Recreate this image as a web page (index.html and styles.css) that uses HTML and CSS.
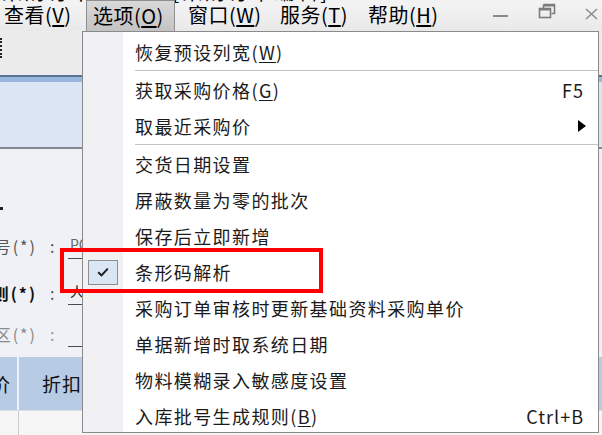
FILE: index.html
```html
<!DOCTYPE html>
<html lang="zh-CN">
<head>
<meta charset="utf-8">
<title>采购订单</title>
<link rel="stylesheet" href="styles.css">
</head>
<body>
<div class="titlestrip"><span class="titletext">采购订单 - 新增 [采购订单编辑]</span></div>
<div class="menubar">
  <div class="mi mi-first">查看(<u>V</u>)</div>
  <div class="mi mi-active">选项(<u>O</u>)</div>
  <div class="mi">窗口(<u>W</u>)</div>
  <div class="mi">服务(<u>T</u>)</div>
  <div class="mi">帮助(<u>H</u>)</div>
  <div class="winctl">
    <span class="wc wc-min"></span>
    <svg class="wc wc-restore" width="18" height="16" viewBox="0 0 18 16">
      <path d="M5.5 1.5h11v9h-3" fill="none" stroke="#7c7c7c" stroke-width="1.6"/>
      <path d="M5.5 1.5v4" fill="none" stroke="#7c7c7c" stroke-width="1.6"/>
      <rect x="1.5" y="5.5" width="11" height="9" fill="none" stroke="#7c7c7c" stroke-width="1.6"/>
      <path d="M1.5 6.5h11" stroke="#7c7c7c" stroke-width="2"/>
      <path d="M5.5 2.5h11" stroke="#7c7c7c" stroke-width="2"/>
    </svg>
    <svg class="wc wc-close" width="13" height="12" viewBox="0 0 13 12">
      <path d="M1 1l11 10M12 1L1 11" stroke="#8c8c8c" stroke-width="1.5" fill="none"/>
    </svg>
  </div>
</div>
<div class="page">
  <div class="toolbar"><span class="dots"></span></div>
  <div class="tabband"></div>
  <div class="bluepanel"></div>
  <div class="form">
    <span class="dot"></span>
    <div class="frow frow-1">
      <div class="flab"><span class="ftext">号(*)</span></div>
      <div class="colon">:</div>
      <div class="fval">PO00123</div>
    </div>
    <div class="frow frow-2">
      <div class="flab flab-strong"><span class="ftext">则(*)</span></div>
      <div class="colon">:</div>
      <div class="fval fval-dark">人员</div>
    </div>
    <div class="frow frow-3">
      <div class="flab flab-light"><span class="ftext">区(*)</span></div>
      <div class="colon colon-light">:</div>
      <div class="fval"></div>
    </div>
  </div>
  <div class="thead">
    <div class="th th-cut"><span>价</span></div>
    <div class="tsep"></div>
    <div class="th th-main">折扣</div>
  </div>
  <div class="trow">
    <div class="td td-cut"></div>
    <div class="tsep tsep-row"></div>
    <div class="td"></div>
  </div>
</div>

<div class="dropdown">
  <div class="item"><span class="ico"></span><span class="label">恢复预设列宽(<u>W</u>)</span></div>
  <div class="sep"></div>
  <div class="item"><span class="ico"></span><span class="label">获取采购价格(<u>G</u>)</span><span class="key">F5</span></div>
  <div class="item item-sub"><span class="ico"></span><span class="label">取最近采购价</span><span class="arrow"></span></div>
  <div class="sep"></div>
  <div class="item"><span class="ico"></span><span class="label">交货日期设置</span></div>
  <div class="item"><span class="ico"></span><span class="label">屏蔽数量为零的批次</span></div>
  <div class="item"><span class="ico"></span><span class="label">保存后立即新增</span></div>
  <div class="item"><span class="ico"><span class="checkbox"><svg width="12" height="10" viewBox="0 0 12 10"><path d="M1.2 5.2l3.3 3.2L10.8 1.6" fill="none" stroke="#1c1c1c" stroke-width="2"/></svg></span></span><span class="label">条形码解析</span></div>
  <div class="item"><span class="ico"></span><span class="label">采购订单审核时更新基础资料采购单价</span></div>
  <div class="item"><span class="ico"></span><span class="label">单据新增时取系统日期</span></div>
  <div class="item"><span class="ico"></span><span class="label">物料模糊录入敏感度设置</span></div>
  <div class="item"><span class="ico"></span><span class="label">入库批号生成规则(<u>B</u>)</span><span class="key">Ctrl+B</span></div>
</div>
<div class="highlight"></div>
</body>
</html>
```

FILE: styles.css
```css
* { box-sizing: border-box; }
html, body { margin: 0; padding: 0; }
body {
  width: 602px;
  height: 435px;
  overflow: hidden;
  position: relative;
  background: #eff1f6;
  font-family: "Noto Sans CJK SC", "Noto Sans", sans-serif;
  color: #000;
}
u { text-decoration: underline; text-underline-offset: 2px; }

.titlestrip {
  height: 3px;
  overflow: hidden;
  background: #f2f2f2;
  padding-left: 2px;
}
.titletext {
  display: block;
  font-size: 20px;
  line-height: 20px;
  margin-top: -18px;
  letter-spacing: 3px;
  color: #000;
  white-space: nowrap;
}

.menubar {
  height: 28px;
  display: grid;
  grid-template-columns: 86px 89px 92px 88px 100px 1fr;
  align-items: stretch;
  background: linear-gradient(#f3f3f3, #e9e9e9);
  font-size: 20px;
  line-height: 24px;
}
.mi {
  padding-left: 13px;
  white-space: nowrap;
  letter-spacing: 0.5px;
}
.mi-first { padding-left: 4px; }
.mi-active {
  padding-left: 6px;
  margin-top: -3px;
  padding-top: 3px;
  background: linear-gradient(#d9d9d9, #c3c3c3);
  border: 1px solid #8f8f8f;
  border-bottom: none;
}
.winctl {
  display: flex;
  align-items: flex-start;
  padding-left: 38px;
}
.wc { display: block; }
.wc-min {
  width: 15px;
  height: 2px;
  background: #8a8a8a;
  margin-top: 12px;
}
.wc-restore { margin-left: 30px; margin-top: 0; }
.wc-close { margin-left: 29px; margin-top: 5px; }

.page { width: 602px; }
.toolbar {
  height: 44px;
  background: #ececec;
  padding-top: 7px;
}
.dots {
  display: block;
  width: 2px;
  height: 20px;
  border-left: 2px dotted #222;
}
.tabband {
  height: 7px;
  border-top: 2px solid #5b7292;
  background: #98b6de;
}
.bluepanel {
  height: 67px;
  background: #dbe5f3;
  border-bottom: 2px solid #85888d;
}
.form {
  height: 208px;
  background: #eff1f6;
  padding-top: 82px;
  position: relative;
}
.dot {
  position: absolute;
  left: 0;
  top: 58px;
  width: 3px;
  height: 3px;
  background: #222;
}
.frow {
  height: 30px;
  display: flex;
  align-items: center;
  font-size: 16px;
  color: #555;
}
.frow-2 { margin-top: 17px; }
.frow-3 { margin-top: 11px; }
.flab {
  width: 37px;
  display: flex;
  justify-content: flex-end;
  overflow: hidden;
  white-space: nowrap;
}
.ftext { letter-spacing: 2px; flex: none; }
.flab-strong { color: #111; font-weight: 700; }
.flab-light { color: #8a8a8a; }
.colon {
  width: 31px;
  padding-left: 13px;
  color: #555;
}
.colon-light { color: #999; }
.fval {
  align-self: flex-start;
  height: 28px;
  width: 60px;
  border-bottom: 1px solid #4a4a4a;
  font-size: 14px;
  line-height: 26px;
  color: #666;
  padding-left: 2px;
  white-space: nowrap;
  overflow: hidden;
}
.fval-dark { color: #222; height: 27px; }

.thead {
  height: 53px;
  display: flex;
  background: #b7cbe5;
  font-size: 19px;
  color: #111;
}
.th {
  display: flex;
  align-items: center;
}
.th-cut {
  width: 17px;
  justify-content: flex-end;
  overflow: hidden;
  padding-right: 7px;
  white-space: nowrap;
}
.th-cut span { flex: none; }
.tsep { width: 2px; background: #eef3fa; }
.th-main { padding-left: 23px; letter-spacing: 1px; }
.trow {
  height: 25px;
  display: flex;
  background: #f6f6f7;
  border-top: 1px solid #d8dde6;
}
.td-cut { width: 17px; }
.tsep-row { background: #c9cdd3; width: 1px; margin-left: 1px; }

.dropdown {
  position: absolute;
  left: 82px;
  top: 31px;
  width: 517px;
  height: 402px;
  border: 1px solid #8a8a8a;
  background: linear-gradient(to right, #f1f1f4 0, #f1f1f4 40px, #ffffff 40px);
  padding-top: 2px;
  font-size: 18px;
  color: #1b1b1b;
  letter-spacing: 1.4px;
}
.item {
  height: 36px;
  display: flex;
  align-items: center;
  padding-right: 14px;
  white-space: nowrap;
}
.ico {
  width: 40px;
  height: 36px;
  display: flex;
  align-items: center;
  justify-content: center;
  flex: none;
}
.label { margin-left: 12px; }
.key { margin-left: auto; letter-spacing: 1px; }
.item-sub { padding-right: 12px; }
.arrow {
  margin-left: auto;
  width: 0;
  height: 0;
  border-left: 8px solid #000;
  border-top: 6px solid transparent;
  border-bottom: 6px solid transparent;
}
.sep {
  height: 2px;
  margin-left: 52px;
  border-top: 1px solid #c4c4c4;
}
.checkbox {
  width: 30px;
  height: 25px;
  border: 1px solid #8e8e8e;
  background: #dbe6f4;
  display: flex;
  align-items: center;
  justify-content: center;
  margin-left: -1px;
}

.highlight {
  position: absolute;
  left: 60px;
  top: 248px;
  width: 263px;
  height: 45px;
  border: 4px solid #ff0000;
}
```
